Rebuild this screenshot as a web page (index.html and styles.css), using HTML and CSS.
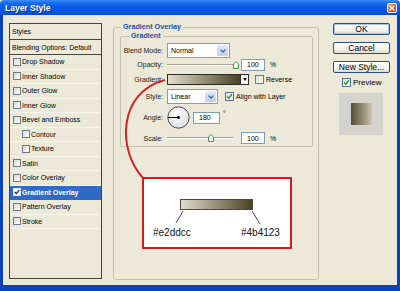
FILE: index.html
```html
<!DOCTYPE html>
<html>
<head>
<meta charset="utf-8">
<title>Layer Style</title>
<link rel="stylesheet" href="styles.css">
</head>
<body>
<div class="window">
  <div class="titlebar">
    <span class="title">Layer Style</span>
    <span class="close"><svg width="6" height="6" viewBox="0 0 6 6"><path d="M0.5 0.5L5.5 5.5M5.5 0.5L0.5 5.5" stroke="#fff" stroke-width="1.4"/></svg></span>
  </div>
  <div class="frame">
    <div class="styles">
      <div class="styles-head">Styles</div>
      <div class="styles-head blend">Blending Options: Default</div>
      <div class="style-item"><span class="cb"></span>Drop Shadow</div>
      <div class="style-item"><span class="cb"></span>Inner Shadow</div>
      <div class="style-item"><span class="cb"></span>Outer Glow</div>
      <div class="style-item"><span class="cb"></span>Inner Glow</div>
      <div class="style-item"><span class="cb"></span>Bevel and Emboss</div>
      <div class="style-item sub"><span class="cb"></span>Contour</div>
      <div class="style-item sub"><span class="cb"></span>Texture</div>
      <div class="style-item"><span class="cb"></span>Satin</div>
      <div class="style-item"><span class="cb"></span>Color Overlay</div>
      <div class="style-item selected"><span class="cb checked"><svg width="6" height="6" viewBox="0 0 6 6"><path d="M0.8 3L2.3 4.6L5.2 1.2" fill="none" stroke="#1b2a55" stroke-width="1.3"/></svg></span>Gradient Overlay</div>
      <div class="style-item"><span class="cb"></span>Pattern Overlay</div>
      <div class="style-item"><span class="cb"></span>Stroke</div>
    </div>

    <fieldset class="group">
      <legend>Gradient Overlay</legend>
      <fieldset class="inner">
        <legend>Gradient</legend>
        <div class="row r-blend">
          <span class="lbl">Blend Mode:</span>
          <span class="select w-blend"><span class="val">Normal</span><span class="dd"><svg width="6" height="4" viewBox="0 0 6 4"><path d="M0.6 0.6L3 3L5.4 0.6" fill="none" stroke="#4d6185" stroke-width="1.3"/></svg></span></span>
        </div>
        <div class="row r-opacity">
          <span class="lbl">Opacity:</span>
          <span class="slider"><span class="track"></span><svg class="thumb" style="left:66px" width="6" height="8" viewBox="0 0 6 8"><path d="M0.5 7.5V3L3 0.5L5.5 3V7.5Z" fill="#f4f4f0" stroke="#3f9a4a" stroke-width="1"/></svg></span>
          <span class="num">100</span>
          <span class="unit">%</span>
        </div>
        <div class="row r-gradient">
          <span class="lbl">Gradient:</span>
          <span class="gradbar"><span class="fill"></span><span class="arrow"><svg width="4" height="3" viewBox="0 0 4 3"><path d="M0 0H4L2 3Z" fill="#000"/></svg></span></span>
          <span class="cb reverse"></span>
          <span class="cb-label">Reverse</span>
        </div>
        <div class="row r-style">
          <span class="lbl">Style:</span>
          <span class="select w-style"><span class="val">Linear</span><span class="dd"><svg width="6" height="4" viewBox="0 0 6 4"><path d="M0.6 0.6L3 3L5.4 0.6" fill="none" stroke="#4d6185" stroke-width="1.3"/></svg></span></span>
          <span class="cb green align"><svg width="7" height="7" viewBox="0 0 7 7"><path d="M1 3.4L2.8 5.3L6 1.2" fill="none" stroke="#21a121" stroke-width="1.4"/></svg></span>
          <span class="cb-label">Align with Layer</span>
        </div>
        <div class="row r-angle">
          <span class="lbl">Angle:</span>
          <svg class="dial" width="23" height="23" viewBox="0 0 23 23">
            <defs><radialGradient id="dg" cx="40%" cy="35%" r="70%"><stop offset="0" stop-color="#ffffff"/><stop offset="1" stop-color="#d9dce6"/></radialGradient></defs>
            <circle cx="11.5" cy="11.5" r="10.7" fill="url(#dg)" stroke="#4a4a55" stroke-width="1"/>
            <line x1="1" y1="11.5" x2="11.5" y2="11.5" stroke="#000" stroke-width="1"/>
            <circle cx="11.5" cy="11.5" r="1.4" fill="#000"/>
          </svg>
          <span class="num angle">180</span>
          <span class="unit deg">°</span>
        </div>
        <div class="row r-scale">
          <span class="lbl">Scale:</span>
          <span class="slider"><span class="track short"></span><svg class="thumb" style="left:41px" width="6" height="8" viewBox="0 0 6 8"><path d="M0.5 7.5V3L3 0.5L5.5 3V7.5Z" fill="#f4f4f0" stroke="#3f9a4a" stroke-width="1"/></svg></span>
          <span class="num">100</span>
          <span class="unit">%</span>
        </div>
      </fieldset>
    </fieldset>

    <div class="actions">
      <button class="btn default">OK</button>
      <button class="btn">Cancel</button>
      <button class="btn">New Style...</button>
      <div class="preview-row">
        <span class="cb green"><svg width="7" height="7" viewBox="0 0 7 7"><path d="M1 3.4L2.8 5.3L6 1.2" fill="none" stroke="#21a121" stroke-width="1.4"/></svg></span>
        <span class="preview-label">Preview</span>
      </div>
      <div class="swatch"><span class="swatch-fill"></span></div>
    </div>
  </div>

  <svg class="curve" width="400" height="291" viewBox="0 0 400 291">
    <path d="M165 80C118 92 117 150 143 178" fill="none" stroke="#d42323" stroke-width="2"/>
  </svg>

  <div class="callout">
    <span class="callout-bar"></span>
    <svg class="leaders" width="146" height="68" viewBox="0 0 146 68">
      <line x1="39" y1="32" x2="32" y2="44" stroke="#333" stroke-width="0.9"/>
      <line x1="108" y1="32" x2="116" y2="45" stroke="#333" stroke-width="0.9"/>
    </svg>
    <span class="hex hex-left">#e2ddcc</span>
    <span class="hex hex-right">#4b4123</span>
  </div>
</div>
</body>
</html>
```

FILE: styles.css
```css
* { box-sizing: border-box; }
html, body { margin: 0; padding: 0; }
body {
  width: 400px;
  height: 291px;
  overflow: hidden;
  background: #ece9d8;
  font-family: "Liberation Sans", Arial, sans-serif;
  font-size: 7px;
  color: #000;
}
.window {
  position: relative;
  width: 400px;
  height: 291px;
  display: flex;
  flex-direction: column;
}
.titlebar {
  flex: none;
  height: 15px;
  display: flex;
  align-items: center;
  justify-content: space-between;
  padding: 0 3px 0 5px;
  background: linear-gradient(#3d8ff9 0%, #1c6cf2 18%, #0a5ae6 45%, #0656e2 75%, #0a4bcc 100%);
  border-radius: 4px 4px 0 0;
}
.title {
  color: #fff;
  font-weight: bold;
  font-size: 8.5px;
  text-shadow: 1px 1px 0 #0b2f94;
}
.close {
  width: 10px;
  height: 10px;
  border: 1px solid #fff;
  border-radius: 2px;
  background: linear-gradient(135deg, #eb9a7c, #d4501f 60%, #c0411a);
  display: flex;
  align-items: center;
  justify-content: center;
}
.frame {
  flex: 1;
  display: flex;
  align-items: flex-start;
  border: solid #0a41bd;
  border-width: 0 3px 6px 3px;
  padding: 8px 0 0 6px;
}

/* styles list */
.styles {
  flex: none;
  width: 93px;
  height: 256px;
  border: 1px solid #46443b;
  display: flex;
  flex-direction: column;
}
.styles-head {
  height: 16px;
  padding-left: 2px;
  display: flex;
  align-items: center;
  border-bottom: 1px solid #46443b;
}
.styles-head.blend { height: 15px; }
.style-item {
  height: 14.5px;
  display: flex;
  align-items: center;
  gap: 1px;
  padding-left: 3px;
  border-bottom: 1px solid #f7f5ee;
}
.style-item.sub { padding-left: 12px; }
.style-item.selected {
  background: #316ac5;
  color: #fff;
  font-weight: bold;
  border-bottom-color: #316ac5;
}
.cb {
  flex: none;
  width: 8px;
  height: 8px;
  border: 1px solid #6b7a8a;
  background: linear-gradient(135deg, #d8d8d0, #ffffff);
  display: flex;
  align-items: center;
  justify-content: center;
}
.cb.checked { background: #fff; border-color: #dfe6f3; }
.cb.green { width: 9px; height: 9px; border-color: #58708c; background: linear-gradient(135deg, #e0e0d8, #ffffff); }

/* group boxes */
.group {
  flex: none;
  margin: 0 0 0 11px;
  padding: 0 5px 0 6px;
  width: 206px;
  height: 257px;
  min-width: 0;
  border: 1px solid #c3bfad;
  border-radius: 3px;
}
.group legend {
  padding: 0 2px;
  margin-left: 1px;
  font-weight: bold;
  color: #1f4fa6;
  line-height: 8px;
  font-size: 7.2px;
}
.inner {
  margin: 1px 0 0 0;
  padding: 3px 0 0 0;
  min-width: 0;
  height: 115px;
  border: 1px solid #c3bfad;
  border-radius: 2px;
}
.inner legend { margin-left: 8px; }

.row { display: flex; align-items: center; }
.r-blend { height: 15px; }
.r-opacity { height: 13px; }
.r-gradient { height: 17px; }
.r-style { height: 17px; }
.r-angle { height: 25px; }
.r-scale { height: 16px; }
.lbl {
  flex: none;
  width: 42px;
  margin-right: 4px;
  text-align: right;
  color: #1a1a1a;
}

.select {
  flex: none;
  display: flex;
  height: 15px;
  padding: 1px;
  border: 1px solid #7f9db9;
  background: #fff;
}
.w-blend { width: 63px; }
.w-style { width: 51px; }
.select .val { flex: 1; display: flex; align-items: center; padding-left: 2px; }
.select .dd {
  width: 11px;
  border-radius: 1px;
  background: linear-gradient(#e3ebfd, #b9cef8);
  display: flex;
  align-items: center;
  justify-content: center;
}

.slider {
  flex: none;
  position: relative;
  width: 71px;
  height: 10px;
  display: flex;
  align-items: center;
}
.track {
  width: 71px;
  height: 2px;
  border-top: 1px solid #a8a597;
  border-bottom: 1px solid #fff;
}
.track.short { width: 66px; }
.thumb { position: absolute; top: 1px; }

.num {
  flex: none;
  width: 24px;
  height: 12px;
  margin-left: 3px;
  padding-left: 5px;
  border: 1px solid #7f9db9;
  background: #fff;
  display: flex;
  align-items: center;
}
.num.angle { width: 27px; margin-left: 3px; }
.unit { margin-left: 5px; }
.unit.deg { margin-left: 3px; align-self: flex-start; margin-top: 5px; }

.gradbar {
  flex: none;
  display: flex;
  width: 82px;
  height: 11px;
  border: 1px solid #2b2a25;
}
.gradbar .fill { flex: 1; background: linear-gradient(to right, #e2ddcc, #4b4123); }
.gradbar .arrow {
  width: 8px;
  border-left: 1px solid #2b2a25;
  background: #f2f2f0;
  display: flex;
  align-items: center;
  justify-content: center;
}
.cb.reverse { width: 9px; height: 9px; margin-left: 6px; }
.cb.align { margin-left: 7px; }
.cb-label { margin-left: 2px; }
.dial { flex: none; }

/* right column */
.actions {
  flex: none;
  width: 57px;
  margin-left: 14px;
  display: flex;
  flex-direction: column;
}
.btn {
  height: 12px;
  margin: 0 0 7px 0;
  padding: 0;
  font-family: "Liberation Sans", Arial, sans-serif;
  font-size: 8.5px;
  line-height: 10px;
  color: #000;
  border: 1px solid #2c4f7c;
  border-radius: 2px;
  background: linear-gradient(#ffffff, #f4f3ee 60%, #dedbd0);
}
.btn.default { box-shadow: inset 0 0 0 1px #a9c3ef; }
.preview-row {
  margin-top: -2px;
  height: 9px;
  padding-left: 9px;
  display: flex;
  align-items: center;
}
.preview-label { margin-left: 2px; font-size: 8px; }
.swatch {
  margin: 6px 0 0 6px;
  width: 44px;
  height: 42px;
  padding: 10px 0 0 12px;
  background: #d5d3cd;
}
.swatch-fill {
  display: block;
  width: 21px;
  height: 22px;
  background: linear-gradient(to right, #564d34, #8c846c 50%, #cbc6b3);
}

/* annotation overlays */
.curve {
  position: absolute;
  left: 0;
  top: 0;
  pointer-events: none;
}
.callout {
  position: absolute;
  left: 142px;
  top: 177px;
  width: 150px;
  height: 72px;
  border: 2px solid #d21d1d;
  background: #fff;
}
.callout-bar {
  position: absolute;
  left: 36px;
  top: 20px;
  width: 73px;
  height: 11px;
  border: 1px solid #4a4a44;
  background: linear-gradient(to right, #e2ddcc, #4b4123);
}
.leaders { position: absolute; left: 0; top: 0; }
.hex {
  position: absolute;
  top: 48px;
  font-size: 10px;
  line-height: 12px;
  color: #111;
}
.hex-left { left: 9px; }
.hex-right { left: 97px; }
```
